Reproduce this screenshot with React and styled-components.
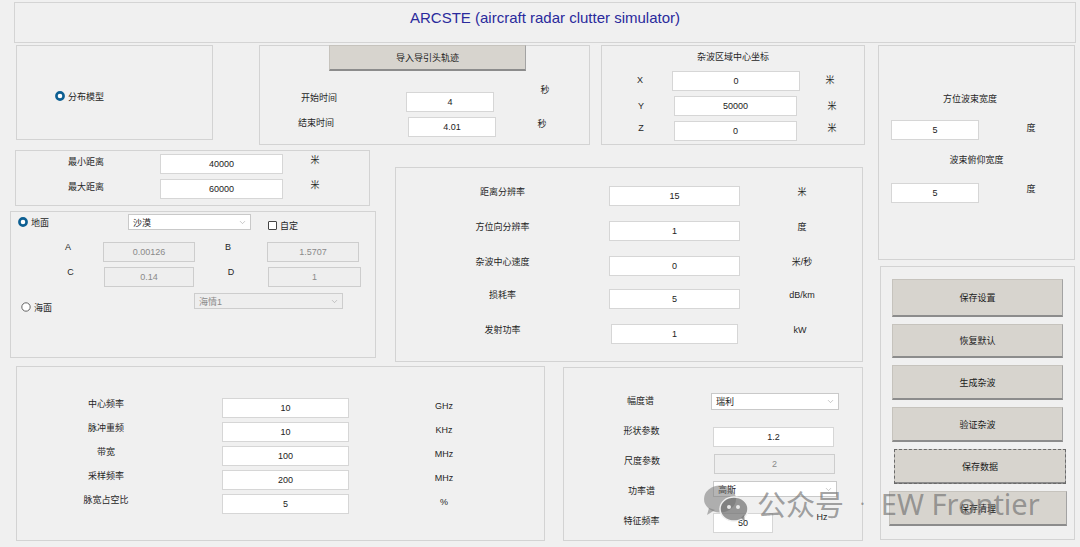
import React from "react";
import styled, { createGlobalStyle } from "styled-components";
import { ChevronDown } from "lucide-react";

const GlobalStyle = createGlobalStyle`
  html, body {
    margin: 0;
    padding: 0;
    background: #f0f0f0;
  }
  body {
    font-family: "Liberation Sans", "Noto Sans CJK SC", sans-serif;
    font-size: 9px;
    color: #262626;
  }
  * {
    box-sizing: border-box;
  }
`;

const Page = styled.div`
  position: relative;
  width: 1080px;
  height: 547px;
  overflow: hidden;
  padding-top: 2px;
`;

const TitleBar = styled.div`
  margin: 0 4px 0 14px;
  height: 41px;
  border: 1px solid #d4d4d4;
  display: flex;
  justify-content: center;
  padding-top: 5px;
  line-height: 20px;
  font-size: 15px;
  color: #2a2a9c;
`;

const Main = styled.div`
  display: flex;
  margin-top: 2px;
`;

const LeftArea = styled.div`
  width: 865px;
  flex-shrink: 0;
  display: flex;
  flex-direction: column;
`;

const RightCol = styled.div`
  margin-left: 13px;
  display: flex;
  flex-direction: column;
`;

const PanelRow = styled.div`
  display: flex;
  align-items: flex-start;
  margin-top: ${(p) => p.$mt || 0}px;
`;

const Stack = styled.div`
  display: flex;
  flex-direction: column;
`;

const Panel = styled.div`
  flex-shrink: 0;
  width: ${(p) => p.$w}px;
  height: ${(p) => p.$h}px;
  margin-left: ${(p) => p.$ml || 0}px;
  margin-top: ${(p) => p.$mt || 0}px;
  border: 1px solid #d3d3d3;
  display: flex;
  flex-direction: column;
`;

const ButtonPanel = styled(Panel)`
  padding-top: 12px;
  gap: 7px;
`;

const FieldRow = styled.div`
  display: flex;
  align-items: flex-start;
  height: ${(p) => p.$h || 20}px;
  margin-top: ${(p) => p.$mt || 0}px;
  margin-left: ${(p) => p.$ml || 0}px;
`;

const Label = styled.span`
  flex-shrink: 0;
  width: ${(p) => p.$w}px;
  padding-left: ${(p) => p.$pl || 0}px;
  padding-right: ${(p) => p.$pr || 0}px;
  margin-top: ${(p) => p.$dy || 0}px;
  text-align: center;
  line-height: ${(p) => p.$lh || 12}px;
  white-space: nowrap;
`;

const Heading = styled.div`
  text-align: center;
  line-height: 12px;
  margin-top: ${(p) => p.$mt || 0}px;
  padding-right: ${(p) => p.$pr || 0}px;
`;

const TextBox = styled.div`
  flex-shrink: 0;
  width: ${(p) => p.$w}px;
  height: ${(p) => p.$h || 20}px;
  margin-left: ${(p) => p.$ml || 0}px;
  background: ${(p) => (p.$disabled ? "#eeeeee" : "#ffffff")};
  border: 1px solid ${(p) => (p.$disabled ? "#cdcdcd" : "#d6d6d6")};
  color: ${(p) => (p.$disabled ? "#8a8a8a" : "#222")};
  display: flex;
  align-items: center;
  justify-content: center;
`;

const SelectBox = styled(TextBox)`
  justify-content: space-between;
  padding: 0 3px 0 4px;
  border-color: ${(p) => (p.$disabled ? "#cdcdcd" : "#c9c9c9")};
`;

const PushButton = styled.div`
  flex-shrink: 0;
  width: ${(p) => p.$w}px;
  height: ${(p) => p.$h || 35}px;
  margin-left: ${(p) => p.$ml || 0}px;
  margin-top: ${(p) => p.$mt || 0}px;
  background: #d7d4ce;
  border: 1px solid #c6c3bd;
  border-right-color: #a3a3a3;
  border-bottom: 2px solid #8c8c8c;
  display: flex;
  align-items: center;
  justify-content: center;
  color: #1a1a1a;
  outline: ${(p) => (p.$focus ? "1px dashed #6a6a6a" : "none")};
  outline-offset: -1px;
`;

const RadioItem = styled.div`
  flex-shrink: 0;
  display: flex;
  align-items: center;
  gap: 3px;
  height: 12px;
  width: ${(p) => (p.$w ? `${p.$w}px` : "auto")};
  margin-left: ${(p) => p.$ml || 0}px;
  margin-top: ${(p) => p.$mt || 0}px;
  font-size: 9px;
`;

const CheckBox = styled.span`
  width: 9px;
  height: 9px;
  border: 1px solid #444;
  border-radius: 1px;
  background: #fff;
`;

const Watermark = styled.div`
  position: absolute;
  left: 703px;
  top: 482px;
  display: flex;
  align-items: center;
  gap: 8px;
  font-family: "Noto Sans", "Noto Sans CJK SC", sans-serif;
  font-size: 29px;
  color: rgba(105, 105, 105, 0.62);
  pointer-events: none;
  white-space: nowrap;
`;

const Dot = styled.span`
  margin: 0 8px;
  font-size: 18px;
`;

const Radio = ({ checked }) => (
  <svg width="10" height="10" viewBox="0 0 10 10">
    {checked ? (
      <circle cx="5" cy="5" r="3.6" fill="#ffffff" stroke="#0d5f92" strokeWidth="2.6" />
    ) : (
      <circle cx="5" cy="5" r="4.2" fill="#fff" stroke="#555" strokeWidth="0.9" />
    )}
  </svg>
);

const Select = ({ value, ...rest }) => (
  <SelectBox {...rest}>
    <span>{value}</span>
    <ChevronDown size={9} color="#a0a0a0" strokeWidth={1.5} />
  </SelectBox>
);

const WeChatIcon = () => (
  <svg width="46" height="38" viewBox="0 0 46 38">
    <ellipse cx="17" cy="15" rx="16" ry="13.5" fill="rgba(120,120,120,0.55)" />
    <path d="M6 24 L4 31 L12 26 Z" fill="rgba(120,120,120,0.55)" />
    <ellipse cx="31" cy="25" rx="14" ry="12" fill="rgba(110,110,110,0.7)" stroke="#f0f0f0" strokeWidth="1.5" />
    <path d="M38 34 L42 38 L41 31 Z" fill="rgba(110,110,110,0.7)" />
    <circle cx="26" cy="23" r="2" fill="#e8e8e8" />
    <circle cx="35" cy="23" r="2" fill="#e8e8e8" />
  </svg>
);

const cluRows = [
  { label: "距离分辨率", value: "15", unit: "米", mt: 18 },
  { label: "方位向分辨率", value: "1", unit: "度", mt: 15 },
  { label: "杂波中心速度", value: "0", unit: "米/秒", mt: 15 },
  { label: "损耗率", value: "5", unit: "dB/km", mt: 13 },
  { label: "发射功率", value: "1", unit: "kW", mt: 15, ml: 2, w: 127 },
];

const radarRows = [
  { label: "中心频率", value: "10", unit: "GHz" },
  { label: "脉冲重频", value: "10", unit: "KHz" },
  { label: "带宽", value: "100", unit: "MHz" },
  { label: "采样频率", value: "200", unit: "MHz" },
  { label: "脉宽占空比", value: "5", unit: "%" },
];

const buttons = [
  { text: "保存设置", h: 38, ml: 11, w: 171 },
  { text: "恢复默认", h: 34, ml: 11, w: 171 },
  { text: "生成杂波", h: 35, ml: 11, w: 171 },
  { text: "验证杂波", h: 35, ml: 11, w: 171 },
  { text: "保存数据", h: 35, ml: 13, w: 172, focus: true },
  { text: "保存清理", h: 35, ml: 8, w: 178 },
];

export default function App() {
  return (
    <Page>
      <GlobalStyle />
      <TitleBar>ARCSTE (aircraft radar clutter simulator)</TitleBar>
      <Main>
        <LeftArea>
          <PanelRow>
            <Panel $w={197} $h={95} $ml={16}>
              <RadioItem $ml={38} $mt={44}>
                <Radio checked />
                分布模型
              </RadioItem>
            </Panel>

            <Panel $w={331} $h={100} $ml={46}>
              <PushButton $w={197} $h={26} $ml={69} $mt={-1}>
                导入导引头轨迹
              </PushButton>
              <FieldRow $mt={21}>
                <Label $w={118}>开始时间</Label>
                <TextBox $w={88} $ml={28}>4</TextBox>
                <Label $w={102} $dy={-8}>秒</Label>
              </FieldRow>
              <FieldRow $mt={5}>
                <Label $w={112}>结束时间</Label>
                <TextBox $w={88} $ml={36}>4.01</TextBox>
                <Label $w={92} $lh={14}>秒</Label>
              </FieldRow>
            </Panel>

            <Panel $w={264} $h={100} $ml={11}>
              <Heading $mt={5}>杂波区域中心坐标</Heading>
              <FieldRow $mt={8}>
                <Label $w={70} $pl={6} $lh={18}>X</Label>
                <TextBox $w={128}>0</TextBox>
                <Label $w={60} $lh={18}>米</Label>
              </FieldRow>
              <FieldRow $mt={5}>
                <Label $w={72} $pl={6} $lh={20}>Y</Label>
                <TextBox $w={123}>50000</TextBox>
                <Label $w={70} $lh={20}>米</Label>
              </FieldRow>
              <FieldRow $mt={5}>
                <Label $w={72} $pl={6} $lh={14}>Z</Label>
                <TextBox $w={123}>0</TextBox>
                <Label $w={70} $lh={14}>米</Label>
              </FieldRow>
            </Panel>
          </PanelRow>

          <PanelRow $mt={5}>
            <Stack>
              <Panel $w={355} $h={56} $ml={15}>
                <FieldRow $mt={3}>
                  <Label $w={140} $lh={16}>最小距离</Label>
                  <TextBox $w={123} $ml={4}>40000</TextBox>
                  <Label $w={64}>米</Label>
                </FieldRow>
                <FieldRow $mt={5}>
                  <Label $w={140} $lh={16}>最大距离</Label>
                  <TextBox $w={123} $ml={4}>60000</TextBox>
                  <Label $w={64}>米</Label>
                </FieldRow>
              </Panel>

              <Panel $w={366} $h={147} $ml={10} $mt={5}>
                <FieldRow $mt={2} $h={16}>
                  <RadioItem $ml={7} $w={110} $mt={2}>
                    <Radio checked />
                    地面
                  </RadioItem>
                  <Select $w={123} $h={16} value="沙漠" />
                  <RadioItem $ml={17} $mt={5}>
                    <CheckBox />
                    自定
                  </RadioItem>
                </FieldRow>
                <FieldRow $mt={12}>
                  <Label $w={92} $pl={22} $lh={10}>A</Label>
                  <TextBox $w={92} $disabled>0.00126</TextBox>
                  <Label $w={72} $pr={6} $lh={10}>B</Label>
                  <TextBox $w={92} $disabled>1.5707</TextBox>
                </FieldRow>
                <FieldRow $mt={5}>
                  <Label $w={93} $pl={26} $lh={10}>C</Label>
                  <TextBox $w={90} $disabled>0.14</TextBox>
                  <Label $w={74} $lh={10}>D</Label>
                  <TextBox $w={93} $disabled>1</TextBox>
                </FieldRow>
                <FieldRow $mt={6} $h={16}>
                  <RadioItem $ml={10} $w={173} $mt={8}>
                    <Radio />
                    海面
                  </RadioItem>
                  <Select $w={149} $h={16} $disabled value="海情1" />
                </FieldRow>
              </Panel>
            </Stack>

            <Panel $w={468} $h={195} $ml={19} $mt={17}>
              {cluRows.map((r) => (
                <FieldRow key={r.label} $mt={r.mt}>
                  <Label $w={213}>{r.label}</Label>
                  <TextBox $w={r.w || 131} $ml={r.ml || 0}>
                    {r.value}
                  </TextBox>
                  <Label $w={124}>{r.unit}</Label>
                </FieldRow>
              ))}
            </Panel>
          </PanelRow>

          <PanelRow $mt={4}>
            <Panel $w={529} $h={175} $ml={16}>
              {radarRows.map((r, i) => (
                <FieldRow key={r.label} $mt={i === 0 ? 31 : 4}>
                  <Label $w={178}>{r.label}</Label>
                  <TextBox $w={127} $ml={27}>
                    {r.value}
                  </TextBox>
                  <Label $w={190} $lh={16}>
                    {r.unit}
                  </Label>
                </FieldRow>
              ))}
            </Panel>

            <Panel $w={300} $h={174} $ml={18} $mt={1}>
              <FieldRow $mt={25} $h={17}>
                <Label $w={147} $pl={6} $lh={17}>幅度谱</Label>
                <Select $w={128} $h={17} value="瑞利" />
              </FieldRow>
              <FieldRow $mt={17}>
                <Label $w={149} $pl={6} $lh={8}>形状参数</Label>
                <TextBox $w={121}>1.2</TextBox>
              </FieldRow>
              <FieldRow $mt={7}>
                <Label $w={150} $pl={6} $lh={14}>尺度参数</Label>
                <TextBox $w={121} $disabled>2</TextBox>
              </FieldRow>
              <FieldRow $mt={7} $h={16}>
                <Label $w={149} $pl={6} $lh={20}>功率谱</Label>
                <Select $w={124} $h={16} value="高斯" />
              </FieldRow>
              <FieldRow $mt={16}>
                <Label $w={149} $pl={6} $lh={16}>特征频率</Label>
                <TextBox $w={60}>50</TextBox>
                <Label $w={98} $lh={8}>Hz</Label>
              </FieldRow>
            </Panel>
          </PanelRow>
        </LeftArea>

        <RightCol>
          <Panel $w={197} $h={215}>
            <Heading $mt={47} $pr={13}>方位波束宽度</Heading>
            <FieldRow $mt={15}>
              <TextBox $w={88} $ml={12}>5</TextBox>
              <Label $w={104} $lh={16}>度</Label>
            </FieldRow>
            <Heading $mt={14}>波束俯仰宽度</Heading>
            <FieldRow $mt={17}>
              <TextBox $w={88} $ml={12}>5</TextBox>
              <Label $w={104}>度</Label>
            </FieldRow>
          </Panel>

          <ButtonPanel $w={195} $h={274} $ml={2} $mt={6}>
            {buttons.map((b) => (
              <PushButton key={b.text} $w={b.w} $h={b.h} $ml={b.ml} $focus={b.focus}>
                {b.text}
              </PushButton>
            ))}
          </ButtonPanel>
        </RightCol>
      </Main>

      <Watermark>
        <WeChatIcon />
        <span>公众号</span>
        <Dot>·</Dot>
        <span>EW Frontier</span>
      </Watermark>
    </Page>
  );
}
